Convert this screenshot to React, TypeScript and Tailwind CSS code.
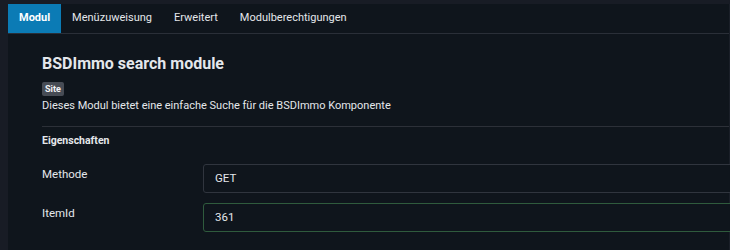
const tabs = ["Modul", "Menüzuweisung", "Erweitert", "Modulberechtigungen"];

function Field({ label, value, valid }: { label: string; value: string; valid?: boolean }) {
  return (
    <div className="flex items-center h-[29px]">
      <div className="w-[161px] shrink-0 text-[11.5px] text-[#e4e7eb] -mt-[7px]">{label}</div>
      <div
        className={
          "flex-1 h-full rounded-[3px] border bg-[#0f151c] flex items-center pl-[11px] text-[11.5px] text-[#e4e7eb] " +
          (valid ? "border-[#2f5b3d]" : "border-[#30353e]")
        }
      >
        {value}
      </div>
    </div>
  );
}

export default function App() {
  return (
    <div
      className="w-[730px] h-[250px] overflow-hidden bg-[#181c25] pt-1 pl-2 flex"
      style={{ fontFamily: "Roboto, 'Liberation Sans', sans-serif" }}
    >
      <div className="flex-1 flex flex-col bg-[#0f151c] border-r border-[#1a1f28] min-w-0">
        <nav className="flex h-[30px] border-b border-[#2a2f38] shrink-0">
          {tabs.map((t, i) => (
            <div
              key={t}
              className={
                "px-[11px] flex items-center text-[11px] " +
                (i === 0 ? "bg-[#0b7bb5] text-white font-bold" : "text-[#e4e7eb]")
              }
            >
              {t}
            </div>
          ))}
        </nav>
        <div className="pl-[34px] pt-[20px] min-w-0">
          <h1 className="text-[16px] leading-[20px] font-bold text-[#e4e7eb]">BSDImmo search module</h1>
          <span className="inline-block mt-[8px] rounded-[2px] bg-[#474c55] px-[3px] text-[9px] leading-[14px] font-bold text-[#f2f3f5]">
            Site
          </span>
          <p className="text-[11px] leading-[13px] text-[#e4e7eb]">
            Dieses Modul bietet eine einfache Suche für die BSDImmo Komponente
          </p>
          <div className="mt-[14px] border-t border-[#2c3038]" />
          <h2 className="mt-[7px] text-[10.5px] leading-[14px] font-bold text-[#e4e7eb]">Eigenschaften</h2>
          <div className="mt-[16px] flex flex-col gap-[10px] -mr-[10px]">
            <Field label="Methode" value="GET" />
            <Field label="ItemId" value="361" valid />
          </div>
        </div>
      </div>
    </div>
  );
}
